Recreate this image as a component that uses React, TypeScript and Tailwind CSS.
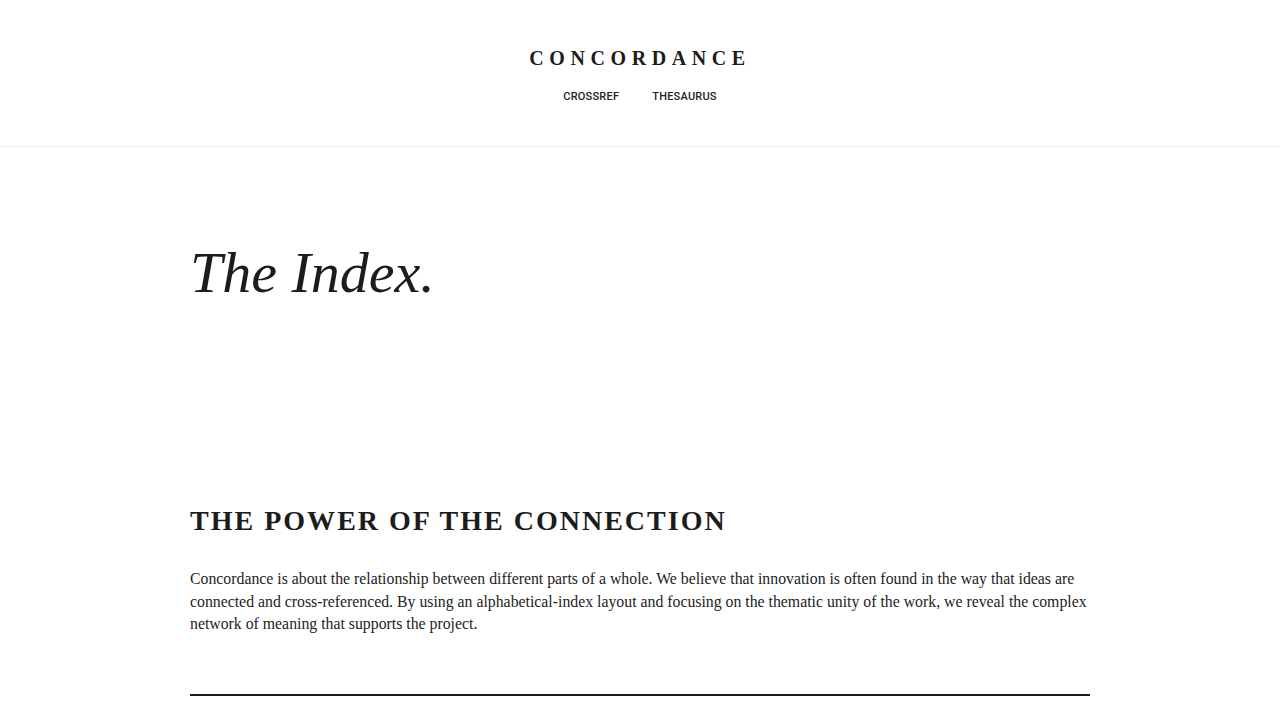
export default function App() {
  const serif = { fontFamily: '"Liberation Serif", "DejaVu Serif", serif' }
  return (
    <div className="min-h-screen bg-white text-[#1c1c1c]" style={serif}>
      <header className="flex h-[147px] flex-col items-center border-b border-[#ececec] pt-[44px]">
        <h1 className="text-[20px] font-bold leading-[28px] tracking-[0.28em]">
          CONCORDANCE
        </h1>
        <nav className="mt-[18px] flex gap-[33px] font-['Roboto',sans-serif] text-[11px] font-medium leading-[14px] tracking-[0.02em] text-[#222]">
          <a href="#">CROSSREF</a>
          <a href="#">THESAURUS</a>
        </nav>
      </header>

      <main className="mx-auto w-[900px]">
        <section className="pt-[89px] pb-[193px]">
          <h2 className="text-[58px] italic leading-[74px]">The Index.</h2>
        </section>

        <section>
          <h3 className="text-[28px] font-bold leading-[36px] tracking-[0.072em]">
            THE POWER OF THE CONNECTION
          </h3>
          <p className="mt-[29px] text-[15.8px] leading-[22.5px] text-[#222]">
            Concordance is about the relationship between different parts of a whole. We believe
            that innovation is often found in the way that ideas are connected and cross-referenced.
            By using an alphabetical-index layout and focusing on the thematic unity of the work, we
            reveal the complex network of meaning that supports the project.
          </p>
          <div className="mt-[58px] h-[2px] bg-[#1a1a1a]" />
        </section>
      </main>
    </div>
  )
}
